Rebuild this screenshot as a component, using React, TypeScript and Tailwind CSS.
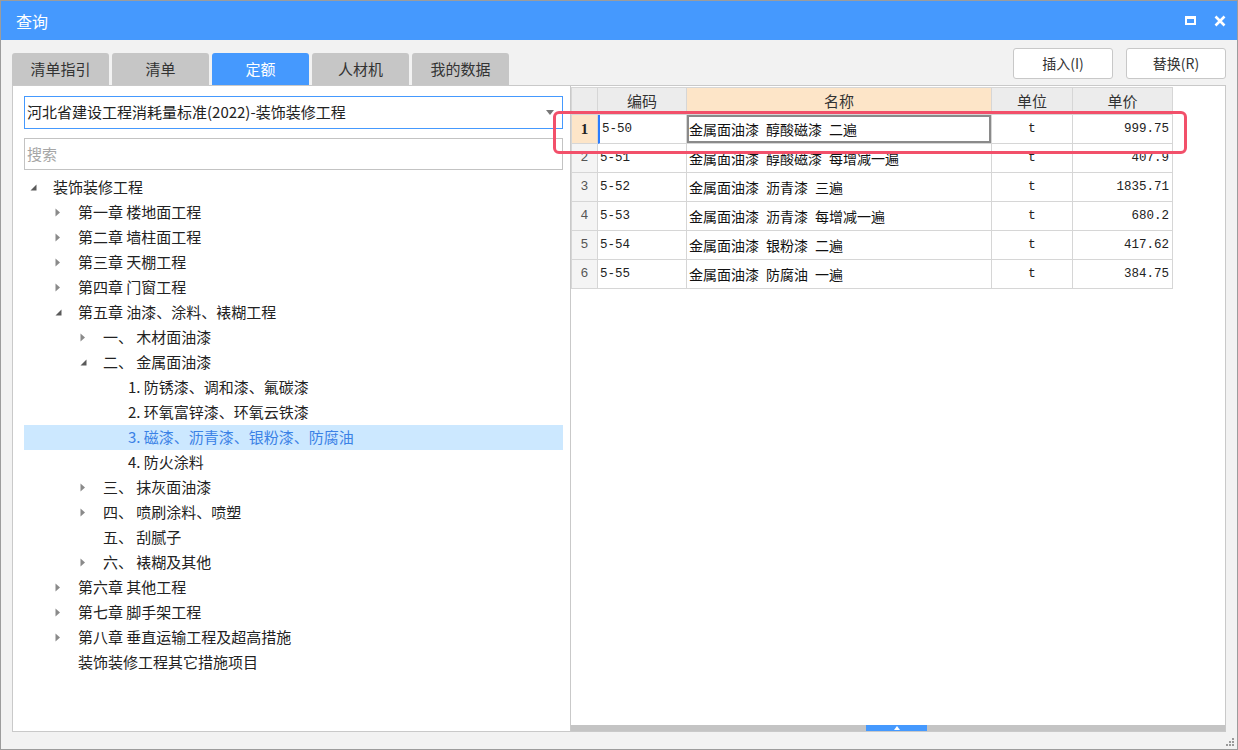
import React from 'react';

type Node = { level: number; text: string; arrow?: 'open' | 'closed'; selected?: boolean };

const tree: Node[] = [
  { level: 0, text: '装饰装修工程', arrow: 'open' },
  { level: 1, text: '第一章 楼地面工程', arrow: 'closed' },
  { level: 1, text: '第二章 墙柱面工程', arrow: 'closed' },
  { level: 1, text: '第三章 天棚工程', arrow: 'closed' },
  { level: 1, text: '第四章 门窗工程', arrow: 'closed' },
  { level: 1, text: '第五章 油漆、涂料、裱糊工程', arrow: 'open' },
  { level: 2, text: '一、 木材面油漆', arrow: 'closed' },
  { level: 2, text: '二、 金属面油漆', arrow: 'open' },
  { level: 3, text: '1. 防锈漆、调和漆、氟碳漆' },
  { level: 3, text: '2. 环氧富锌漆、环氧云铁漆' },
  { level: 3, text: '3. 磁漆、沥青漆、银粉漆、防腐油', selected: true },
  { level: 3, text: '4. 防火涂料' },
  { level: 2, text: '三、 抹灰面油漆', arrow: 'closed' },
  { level: 2, text: '四、 喷刷涂料、喷塑', arrow: 'closed' },
  { level: 2, text: '五、 刮腻子' },
  { level: 2, text: '六、 裱糊及其他', arrow: 'closed' },
  { level: 1, text: '第六章 其他工程', arrow: 'closed' },
  { level: 1, text: '第七章 脚手架工程', arrow: 'closed' },
  { level: 1, text: '第八章 垂直运输工程及超高措施', arrow: 'closed' },
  { level: 1, text: '装饰装修工程其它措施项目' },
];

const indent = ['pl-0', 'pl-[25px]', 'pl-[50px]', 'pl-[75px]'];

const rows = [
  { code: '5-50', name: '金属面油漆\u2002醇酸磁漆\u2002二遍', unit: 't', price: '999.75' },
  { code: '5-51', name: '金属面油漆\u2002醇酸磁漆\u2002每增减一遍', unit: 't', price: '407.9' },
  { code: '5-52', name: '金属面油漆\u2002沥青漆\u2002三遍', unit: 't', price: '1835.71' },
  { code: '5-53', name: '金属面油漆\u2002沥青漆\u2002每增减一遍', unit: 't', price: '680.2' },
  { code: '5-54', name: '金属面油漆\u2002银粉漆\u2002二遍', unit: 't', price: '417.62' },
  { code: '5-55', name: '金属面油漆\u2002防腐油\u2002一遍', unit: 't', price: '384.75' },
];

const tabs = ['清单指引', '清单', '定额', '人材机', '我的数据'];

const font = "font-['Noto_Sans_CJK_SC','Noto_Sans',sans-serif]";
const mono = "font-['Liberation_Mono','Noto_Sans_CJK_SC',monospace]";

const Arrow = ({ kind }: { kind?: 'open' | 'closed' }) => {
  if (kind === 'closed')
    return (
      <svg width="6" height="9" viewBox="0 0 6 9" className="ml-[6px]">
        <path d="M0.5 0.5 L5 4.5 L0.5 8.5 Z" fill="#8a8a8a" />
      </svg>
    );
  if (kind === 'open')
    return (
      <svg width="7" height="7" viewBox="0 0 7 7" className="ml-[6px]">
        <path d="M6.5 0.5 L6.5 6.5 L0.5 6.5 Z" fill="#5a5a5a" />
      </svg>
    );
  return null;
};

export default function App() {
  return (
    <div className={`relative w-[1238px] h-[750px] bg-[#f2f2f2] border border-[#9c9c9c] flex flex-col ${font}`}>
      {/* title */}
      <div className="h-[39px] bg-[#4599fe] flex items-center pl-[15px] pr-[11px] text-white">
        <span className="text-[16px]">查询</span>
        <div className="ml-auto flex items-center gap-[18px]">
          <div className="w-[11px] h-[9px] border-2 border-t-[3px] border-white" />
          <svg width="12" height="12" viewBox="0 0 12 12">
            <path d="M1.5 1.5 L10.5 10.5 M10.5 1.5 L1.5 10.5" stroke="white" strokeWidth="2.6" />
          </svg>
        </div>
      </div>

      {/* tabs + buttons */}
      <div className="h-[45px] flex pl-[11px] pr-[11px]">
        <div className="flex items-end gap-[3px]">
          {tabs.map((t) => (
            <div
              key={t}
              className={`w-[97px] h-[32px] rounded-t-[3px] flex items-center justify-center text-[15px] ${
                t === '定额' ? 'bg-[#4599fe] text-white' : 'bg-[#c6c6c6] text-[#333]'
              }`}
            >
              {t}
            </div>
          ))}
        </div>
        <div className="ml-auto pt-[8px] flex gap-[13px]">
          <button className="w-[100px] h-[31px] bg-white border border-[#c8c8c8] rounded-[3px] text-[14px] text-[#333]">
            插入(I)
          </button>
          <button className="w-[100px] h-[31px] bg-white border border-[#c8c8c8] rounded-[3px] text-[14px] text-[#333]">
            替换(R)
          </button>
        </div>
      </div>

      {/* panels */}
      <div className="h-[647px] flex pl-[11px]">
        {/* left */}
        <div className="w-[558px] h-full bg-white border border-r-0 border-[#c9c9c9] flex flex-col pl-[11px] pr-[7px] pt-[10px]">
          <div className="h-[33px] border border-[#4599fe] flex items-center pl-[2px] pr-[8px] relative">
            <span className="text-[15px] text-[#222]">河北省建设工程消耗量标准(2022)-装饰装修工程</span>
            <svg width="8" height="5" viewBox="0 0 8 5" className="ml-auto">
              <path d="M0 0 L8 0 L4 5 Z" fill="#777" />
            </svg>
          </div>
          <div className="mt-[9px] h-[32px] border border-[#c3c3c3] flex items-center pl-[2px]">
            <span className="text-[15px] text-[#a6a6a6]">搜索</span>
          </div>
          <div className="mt-[5px] flex flex-col">
            {tree.map((n, i) => (
              <div
                key={i}
                className={`h-[25px] flex items-center ${indent[n.level]} ${n.selected ? 'bg-[#cce8ff]' : ''}`}
              >
                <div className="w-[29px] flex items-center">
                  <Arrow kind={n.arrow} />
                </div>
                <span className={`text-[15px] whitespace-pre ${n.selected ? 'text-[#3b82e6]' : 'text-[#222]'}`}>
                  {n.text}
                </span>
              </div>
            ))}
          </div>
        </div>

        {/* right */}
        <div className="w-[656px] h-full bg-white border border-[#c9c9c9] flex flex-col">
          <div className="flex-1 pt-[1px]">
            <div className="grid grid-cols-[26px_89px_305px_81px_100px] w-fit border-t border-l border-[#d6d6d6]">
              <div className="h-[27px] bg-[#ececec] border-r border-b border-[#d6d6d6]" />
              <div className="h-[27px] bg-[#ececec] border-r border-b border-[#d6d6d6] flex items-center justify-center text-[15px] text-[#333]">编码</div>
              <div className="h-[27px] bg-[#fde5c8] border-r border-b border-[#d6d6d6] flex items-center justify-center text-[15px] text-[#333]">名称</div>
              <div className="h-[27px] bg-[#ececec] border-r border-b border-[#d6d6d6] flex items-center justify-center text-[15px] text-[#333]">单位</div>
              <div className="h-[27px] bg-[#ececec] border-r border-b border-[#d6d6d6] flex items-center justify-center text-[15px] text-[#333]">单价</div>
              {rows.map((r, i) => (
                <React.Fragment key={r.code}>
                  <div
                    className={`h-[29px] border-r border-b border-[#d6d6d6] flex items-center justify-center ${
                      i === 0 ? "bg-[#fde5c8] font-bold text-[#222] font-['Liberation_Serif',serif] text-[15px]" : `bg-[#f4f4f4] text-[#555] text-[13px] ${mono}`
                    }`}
                  >
                    {i + 1}
                  </div>
                  <div
                    className={`h-[29px] border-r border-b border-[#d6d6d6] flex items-center pl-[2px] text-[12.5px] text-[#222] ${mono} ${
                      i === 0 ? 'border-l-2 border-l-[#2b7cff]' : ''
                    }`}
                  >
                    {r.code}
                  </div>
                  <div className="h-[29px] border-r border-b border-[#d6d6d6] flex">
                    <div
                      className={`flex-1 flex items-center text-[14px] text-[#111] whitespace-pre ${
                        i === 0 ? 'border-2 border-[#8a8a8a] pl-0' : 'pl-[2px]'
                      }`}
                    >
                      {r.name}
                    </div>
                  </div>
                  <div className={`h-[29px] border-r border-b border-[#d6d6d6] flex items-center justify-center text-[13px] text-[#222] ${mono}`}>
                    {r.unit}
                  </div>
                  <div className={`h-[29px] border-r border-b border-[#d6d6d6] flex items-center justify-end pr-[3px] text-[12.5px] text-[#222] ${mono}`}>
                    {r.price}
                  </div>
                </React.Fragment>
              ))}
            </div>
          </div>
          <div className="h-[6px] bg-[#c4c4c4] flex">
            <div className="ml-[295px] w-[61px] h-full bg-[#4599fe] flex items-center justify-center">
              <svg width="6" height="4" viewBox="0 0 6 4">
                <path d="M0 4 L3 0 L6 4 Z" fill="white" />
              </svg>
            </div>
          </div>
        </div>
      </div>

      {/* bottom strip with resize grip */}
      <div className="flex-1 flex items-end justify-end pr-[2px] pb-[2px]">
        <svg width="10" height="10" viewBox="0 0 10 10">
          <rect x="7" y="1" width="2" height="2" fill="#9a9a9a" />
          <rect x="4" y="4" width="2" height="2" fill="#9a9a9a" />
          <rect x="7" y="4" width="2" height="2" fill="#9a9a9a" />
          <rect x="1" y="7" width="2" height="2" fill="#9a9a9a" />
          <rect x="4" y="7" width="2" height="2" fill="#9a9a9a" />
          <rect x="7" y="7" width="2" height="2" fill="#9a9a9a" />
        </svg>
      </div>

      {/* red annotation frame */}
      <div className="absolute left-[552px] top-[110px] w-[634px] h-[43px] border-[3px] border-[#f2506a] rounded-[6px] pointer-events-none" />
    </div>
  );
}
